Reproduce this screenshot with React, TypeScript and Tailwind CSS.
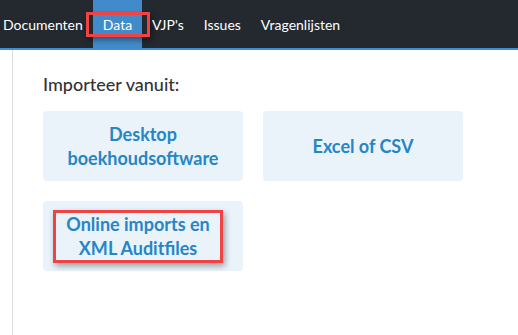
const navItems = ['Documenten', 'Data', "VJP's", 'Issues', 'Vragenlijsten']

function Card({ children, marked }: { children: React.ReactNode; marked?: boolean }) {
  return (
    <div className="h-[70px] rounded bg-[#eaf2fa] flex items-center justify-center">
      <div
        className={
          marked
            ? 'border-[3px] border-[#f04444] shadow-[2px_3px_6px_rgba(0,0,0,0.35)] w-[170px] h-[53px] mr-[10px] flex items-center justify-center'
            : ''
        }
      >
        <span className="text-[18px] leading-[24px] font-bold text-[#2586c6] text-center block">{children}</span>
      </div>
    </div>
  )
}

export default function App() {
  return (
    <div className="w-[518px] h-[335px] bg-white overflow-hidden" style={{ fontFamily: 'Lato, "Open Sans", sans-serif' }}>
      {/* Navbar */}
      <nav className="h-[48px] bg-[#23292f] border-b-2 border-[#3d8fd1] box-content flex items-stretch">
        {navItems.map((item, i) => (
          <div
            key={item}
            className={
              'relative flex items-center text-[14px] text-white px-[10px] ' +
              (i === 0 ? 'pl-[3px] ' : '') +
              (item === 'Data' ? 'bg-[#428bca]' : '')
            }
          >
            {item}
            {item === 'Data' && (
              <div className="absolute left-[-7px] right-[-8px] top-[12px] h-[25px] border-[3px] border-[#f04444] shadow-[2px_3px_6px_rgba(0,0,0,0.4)]" />
            )}
          </div>
        ))}
      </nav>

      <div className="ml-[12px] border-l border-[#dddddd] h-[285px] pl-[30px] pt-[22px]">
        <h2 className="text-[18px] leading-[24px] text-[#333333] font-medium mb-[15px]">Importeer vanuit:</h2>
        <div className="grid grid-cols-[200px_200px] gap-[20px]">
          <Card>
            Desktop
            <br />
            boekhoudsoftware
          </Card>
          <Card>Excel of CSV</Card>
          <Card marked>
            Online imports en
            <br />
            XML Auditfiles
          </Card>
        </div>
      </div>
    </div>
  )
}
